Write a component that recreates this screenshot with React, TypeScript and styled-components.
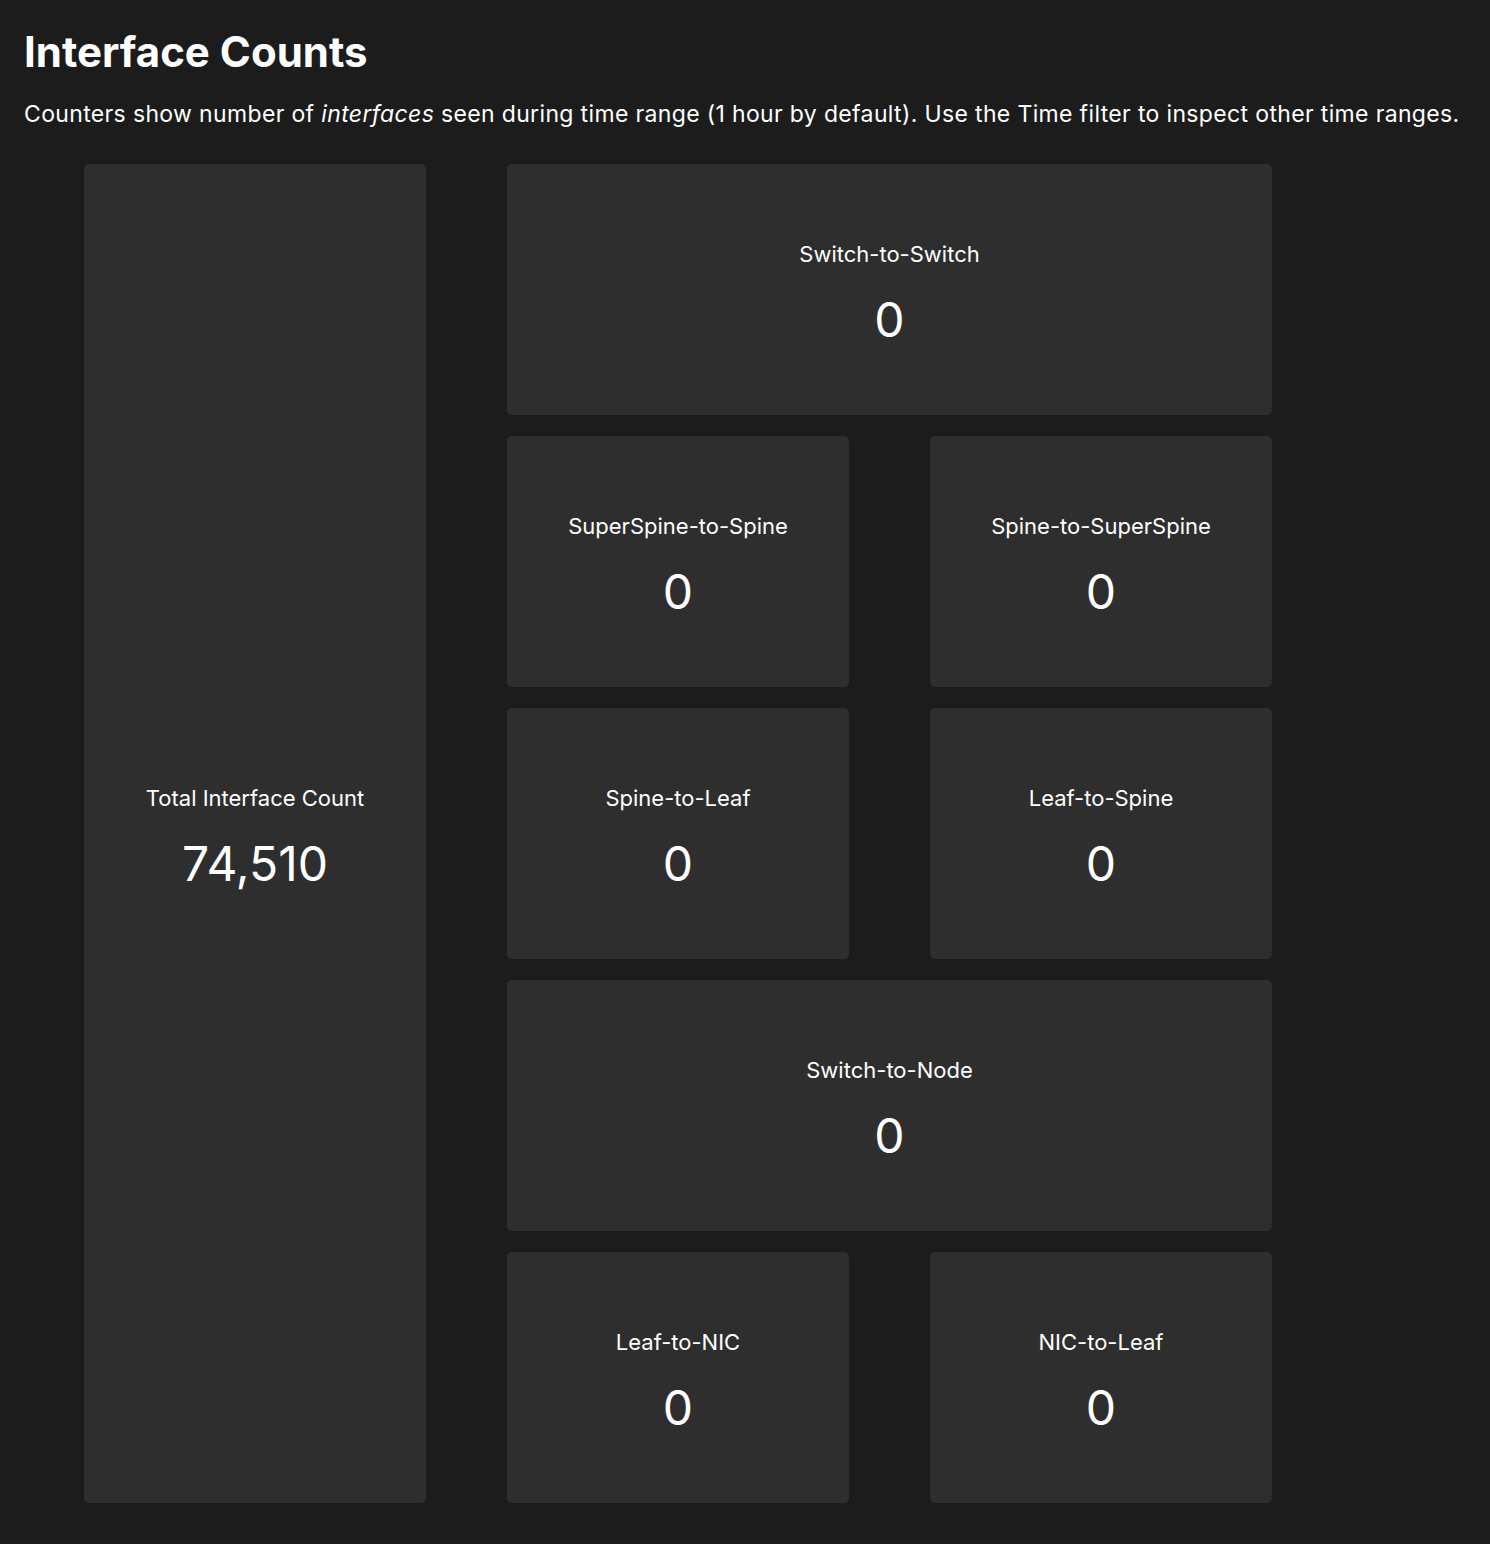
import React from 'react';
import styled, { createGlobalStyle } from 'styled-components';

const GlobalStyle = createGlobalStyle`
  html, body {
    margin: 0;
    padding: 0;
    background: #1c1c1c;
  }
  body {
    font-family: Inter, "Noto Sans", "Liberation Sans", sans-serif;
    color: #ffffff;
  }
`;

const Page = styled.div`
  padding: 24px 24px 40px 24px;
  min-height: 1544px;
  box-sizing: border-box;
`;

const Title = styled.h1`
  margin: 0;
  font-size: 42px;
  font-weight: 700;
  line-height: 56px;
`;

const Subtitle = styled.p`
  margin: 20px 0 0 0;
  font-size: 23px;
  line-height: 28px;
  font-weight: 400;
  letter-spacing: 0.35px;
`;

const Grid = styled.div`
  display: grid;
  grid-template-columns: 342px 342px 342px;
  grid-template-rows: repeat(5, 251px);
  column-gap: 81px;
  row-gap: 21px;
  margin: 36px 0 0 60px;
`;

const Card = styled.div<{ $col: string; $row: string }>`
  grid-column: ${p => p.$col};
  grid-row: ${p => p.$row};
  background: #2e2e2e;
  border-radius: 5px;
  display: flex;
  flex-direction: column;
  align-items: center;
  justify-content: center;
  gap: 24px;
  padding-top: 8px;
  box-sizing: border-box;
`;

const Label = styled.div`
  font-size: 22px;
  line-height: 28px;
  letter-spacing: 0;
`;

const Value = styled.div`
  font-size: 48px;
  line-height: 56px;
  font-weight: 400;
`;

const cards = [
  { label: 'Total Interface Count', value: '74,510', col: '1', row: '1 / span 5' },
  { label: 'Switch-to-Switch', value: '0', col: '2 / span 2', row: '1' },
  { label: 'SuperSpine-to-Spine', value: '0', col: '2', row: '2' },
  { label: 'Spine-to-SuperSpine', value: '0', col: '3', row: '2' },
  { label: 'Spine-to-Leaf', value: '0', col: '2', row: '3' },
  { label: 'Leaf-to-Spine', value: '0', col: '3', row: '3' },
  { label: 'Switch-to-Node', value: '0', col: '2 / span 2', row: '4' },
  { label: 'Leaf-to-NIC', value: '0', col: '2', row: '5' },
  { label: 'NIC-to-Leaf', value: '0', col: '3', row: '5' },
];

const App: React.FC = () => {
  return (
    <Page>
      <GlobalStyle />
      <Title>Interface Counts</Title>
      <Subtitle>
        Counters show number of <em>interfaces</em> seen during time range (1 hour by default). Use the Time filter to inspect other time ranges.
      </Subtitle>
      <Grid>
        {cards.map(c => (
          <Card key={c.label} $col={c.col} $row={c.row}>
            <Label>{c.label}</Label>
            <Value>{c.value}</Value>
          </Card>
        ))}
      </Grid>
    </Page>
  );
};

export default App;
